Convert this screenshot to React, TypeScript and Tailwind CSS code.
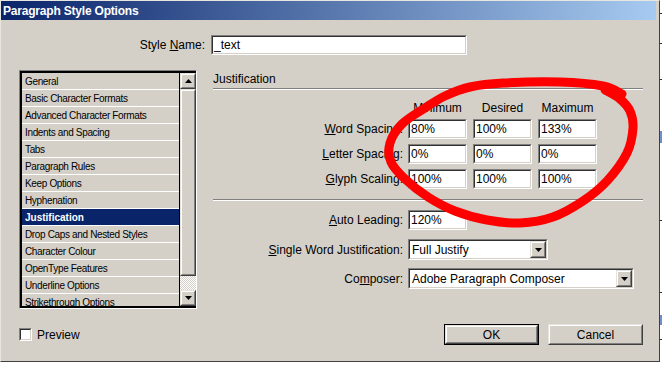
import React from "react";

const font = "font-['Liberation_Sans',Arial,sans-serif]";

function Sunken({ className = "", innerClass = "", children }: { className?: string; innerClass?: string; children?: React.ReactNode }) {
  return (
    <div className={`border border-t-[#808080] border-l-[#808080] border-b-white border-r-white ${className}`}>
      <div className={`w-full h-full border border-t-[#303030] border-l-[#303030] border-b-[#d4d0c8] border-r-[#d4d0c8] ${innerClass}`}>{children}</div>
    </div>
  );
}

function Raised({ className = "", innerClass = "", children }: { className?: string; innerClass?: string; children?: React.ReactNode }) {
  return (
    <div className={`border border-t-[#e4e2dc] border-l-[#e4e2dc] border-b-[#404040] border-r-[#404040] bg-[#d4d0c8] ${className}`}>
      <div className={`w-full h-full border border-t-white border-l-white border-b-[#808080] border-r-[#808080] ${innerClass}`}>{children}</div>
    </div>
  );
}

function Tri({ up = false }: { up?: boolean }) {
  return (
    <svg width="7" height="4" viewBox="0 0 7 4">
      {up ? <polygon points="3.5,0 7,4 0,4" fill="#000" /> : <polygon points="0,0 7,0 3.5,4" fill="#000" />}
    </svg>
  );
}

function Field({ value, className = "" }: { value: string; className?: string }) {
  return (
    <Sunken className={`h-[20px] ${className}`} innerClass="bg-white flex items-center pl-[1px] text-[12px] leading-none">
      {value}
    </Sunken>
  );
}

function Select({ value, className = "" }: { value: string; className?: string }) {
  return (
    <Sunken className={`h-[21px] ${className}`} innerClass="bg-white flex items-center pl-[2px] text-[12px] leading-none">
      <span className="flex-1">{value}</span>
      <Raised className="w-[16px] h-[17px]" innerClass="flex items-center justify-center">
        <Tri />
      </Raised>
    </Sunken>
  );
}

const items = [
  "General",
  "Basic Character Formats",
  "Advanced Character Formats",
  "Indents and Spacing",
  "Tabs",
  "Paragraph Rules",
  "Keep Options",
  "Hyphenation",
  "Justification",
  "Drop Caps and Nested Styles",
  "Character Colour",
  "OpenType Features",
  "Underline Options",
  "Strikethrough Options",
];

const pts: [number, number][] = [
  [622, 94], [603, 86], [560, 82], [503, 83], [470, 87], [445, 96], [425, 108], [402, 124],
  [390, 143], [391, 162], [405, 179], [428, 197], [455, 211], [487, 220], [520, 223],
  [553, 217], [583, 201], [607, 181], [627, 153], [633, 128], [630, 111], [620, 99], [605, 90],
];

function smooth(p: [number, number][]) {
  let d = `M ${p[0][0]} ${p[0][1]}`;
  for (let i = 0; i < p.length - 1; i++) {
    const p0 = p[i - 1] || p[i];
    const p1 = p[i];
    const p2 = p[i + 1];
    const p3 = p[i + 2] || p2;
    const c1x = p1[0] + (p2[0] - p0[0]) / 6;
    const c1y = p1[1] + (p2[1] - p0[1]) / 6;
    const c2x = p2[0] - (p3[0] - p1[0]) / 6;
    const c2y = p2[1] - (p3[1] - p1[1]) / 6;
    d += ` C ${c1x} ${c1y}, ${c2x} ${c2y}, ${p2[0]} ${p2[1]}`;
  }
  return d;
}

function Row({ label, vals }: { label: React.ReactNode; vals: string[] }) {
  return (
    <div className="flex items-center h-[20px]">
      <div className="w-[190px] text-right text-[12px]">{label}</div>
      <div className="ml-[5px] flex gap-[6px]">
        {vals.map((v, i) => (
          <Field key={i} value={v} className="w-[59px]" />
        ))}
      </div>
    </div>
  );
}

export default function App() {
  return (
    <div className={`relative w-[662px] h-[366px] bg-white overflow-hidden text-black flex ${font}`}>
      <div className="w-[660px] h-[362px] shrink-0 bg-[#d4d0c8] border-t border-l border-t-[#e8e6e0] border-l-[#e8e6e0] border-r border-b border-r-[#404040] border-b-[#404040] flex flex-col">
        {/* title bar */}
        <div className="h-[19px] mr-[3px] bg-[linear-gradient(to_right,#0a246a,#a6caf0)] flex items-center pl-[2px]">
          <span className="text-white font-bold text-[12px] tracking-[-0.2px]">Paragraph Style Options</span>
        </div>

        {/* style name */}
        <div className="mt-[15px] flex items-center h-[20px]">
          <div className="w-[204px] text-right text-[12px]">
            Style <span className="underline">N</span>ame:
          </div>
          <Field value="_text" className="ml-[6px] w-[256px]" />
        </div>

        {/* main */}
        <div className="mt-[15px] flex">
          {/* list */}
          <div className="ml-[18px] w-[178px] h-[239px] border border-t-[#808080] border-l-[#808080] border-b-white border-r-white">
            <div className="w-full h-full border-2 border-black border-r-0 flex">
              <div className="flex-1 overflow-hidden border-r border-black">
                {items.map((it) => (
                  <div
                    key={it}
                    className={`h-[17px] border-b border-white pl-[3px] flex items-center text-[10px] tracking-[-0.35px] whitespace-nowrap ${
                      it === "Justification" ? "bg-[#0a246a] text-white font-bold tracking-[0px]" : "bg-[#d4d0c8]"
                    }`}
                  >
                    {it}
                  </div>
                ))}
              </div>
              <div className="w-[16px] flex flex-col">
                <Raised className="h-[16px]" innerClass="flex items-center justify-center">
                  <Tri up />
                </Raised>
                <Raised className="h-[187px]" />
                <div className="flex-1 bg-[repeating-conic-gradient(#ffffff_0_25%,#d4d0c8_0_50%)] bg-[length:2px_2px]" />
                <Raised className="h-[16px]" innerClass="flex items-center justify-center">
                  <Tri />
                </Raised>
              </div>
            </div>
          </div>

          {/* right panel */}
          <div className="ml-[16px] w-[430px] flex flex-col">
            <div className="h-[18px] flex items-center text-[12px]">Justification</div>
            <div className="h-[2px] border-t border-t-[#808080] border-b border-b-white" />
            <div className="mt-[10px] h-[16px] flex items-center">
              <div className="w-[195px]" />
              <div className="flex gap-[6px] text-[12px]">
                <div className="w-[59px] text-center">Minimum</div>
                <div className="w-[59px] text-center">Desired</div>
                <div className="w-[59px] text-center">Maximum</div>
              </div>
            </div>
            <div className="mt-[3px] flex flex-col gap-[5px]">
              <Row label={<><span className="underline">W</span>ord Spacing:</>} vals={["80%", "100%", "133%"]} />
              <Row label={<><span className="underline">L</span>etter Spacing:</>} vals={["0%", "0%", "0%"]} />
              <Row label={<><span className="underline">G</span>lyph Scaling:</>} vals={["100%", "100%", "100%"]} />
            </div>
            <div className="mt-[10px] h-[2px] border-t border-t-[#808080] border-b border-b-white" />
            <div className="mt-[9px] flex items-center h-[20px]">
              <div className="w-[190px] text-right text-[12px]">
                <span className="underline">A</span>uto Leading:
              </div>
              <Field value="120%" className="ml-[5px] w-[59px]" />
            </div>
            <div className="mt-[9px] flex items-center h-[21px]">
              <div className="w-[190px] text-right text-[12px]">
                <span className="underline">S</span>ingle Word Justification:
              </div>
              <Select value="Full Justify" className="ml-[5px] w-[140px]" />
            </div>
            <div className="mt-[8px] flex items-center h-[21px]">
              <div className="w-[190px] text-right text-[12px]">
                Co<span className="underline">m</span>poser:
              </div>
              <Select value="Adobe Paragraph Composer" className="ml-[5px] w-[226px]" />
            </div>
          </div>
        </div>

        {/* bottom */}
        <div className="mt-[15px] flex items-center h-[21px]">
          <div className="ml-[18px] flex items-center">
            <Sunken className="w-[13px] h-[13px]" innerClass="bg-white" />
            <span className="ml-[5px] text-[12px]">Preview</span>
          </div>
          <div className="ml-auto mr-[16px] flex gap-[9px]">
            <div className="border border-black">
              <Raised className="w-[93px] h-[19px]" innerClass="flex items-center justify-center text-[12px]">
                OK
              </Raised>
            </div>
            <Raised className="w-[95px] h-[21px]" innerClass="flex items-center justify-center text-[12px]">
              Cancel
            </Raised>
          </div>
        </div>
      </div>

      {/* background strip beyond the window */}
      <div className="w-[2px] flex flex-col">
        <div className="mt-[13px] h-[1px] bg-[#303030]" />
        <div className="mt-[29px] h-[1px] bg-[#303030]" />
        <div className="mt-[35px] h-[1px] bg-[#303030]" />
        <div className="mt-[51px] h-[12px] bg-[#6f8fc8]" />
        <div className="mt-[77px] h-[1px] bg-[#303030]" />
        <div className="mt-[71px] h-[1px] bg-[#303030]" />
        <div className="mt-[22px] h-[10px] bg-[#6f8fc8]" />
        <div className="mt-[14px] h-[1px] bg-[#303030]" />
      </div>

      {/* red annotation */}
      <svg className="absolute inset-0 pointer-events-none" width="662" height="366" viewBox="0 0 662 366">
        <path d={smooth(pts)} fill="none" stroke="#ff0000" strokeWidth="9" strokeLinecap="round" strokeLinejoin="round" />
      </svg>
    </div>
  );
}
